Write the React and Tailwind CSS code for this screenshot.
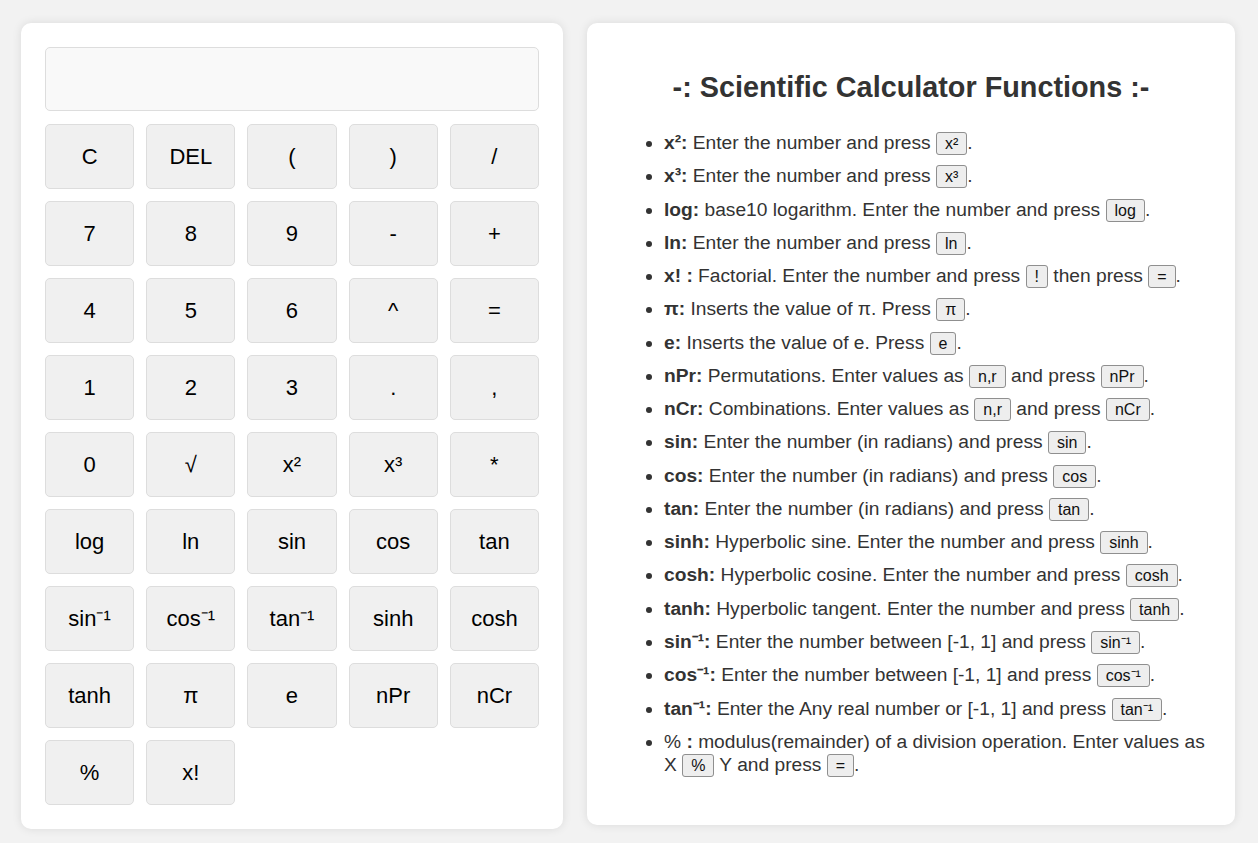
import React from "react";

const buttons = [
  "C", "DEL", "(", ")", "/",
  "7", "8", "9", "-", "+",
  "4", "5", "6", "^", "=",
  "1", "2", "3", ".", ",",
  "0", "√", "x²", "x³", "*",
  "log", "ln", "sin", "cos", "tan",
  "sin⁻¹", "cos⁻¹", "tan⁻¹", "sinh", "cosh",
  "tanh", "π", "e", "nPr", "nCr",
  "%", "x!",
];

function K({ children }) {
  return (
    <span className="bg-[#eeeeee] border border-[#8f8f8f] rounded-[3px] px-[8px] py-[2px] text-[16px] leading-[16px] text-[#111]">
      {children}
    </span>
  );
}

function Item({ children }) {
  return <li className="mb-[10.28px] leading-[23px]">{children}</li>;
}

export default function App() {
  return (
    <div
      className="min-h-[843px] bg-[#f2f2f2] flex items-start gap-6 pl-[21px] pt-[23px]"
      style={{ fontFamily: '"Liberation Sans", Arial, sans-serif' }}
    >
      <div className="w-[542px] bg-white rounded-[10px] shadow-[0_0_10px_rgba(0,0,0,0.1)] p-6 flex flex-col">
        <div className="h-[64px] bg-[#f9f9f9] border border-[#dddddd] rounded-[5px] mb-[13px]" />
        <div className="grid grid-cols-5 gap-[12px]">
          {buttons.map((b, i) => (
            <button
              key={i}
              className="h-[65px] bg-[#f0f0f0] border border-[#dddddd] rounded-[5px] text-[22px] text-black flex items-center justify-center"
            >
              {b}
            </button>
          ))}
        </div>
      </div>

      <div className="w-[648px] bg-white rounded-[10px] shadow-[0_0_10px_rgba(0,0,0,0.1)] px-6 pt-[48px] pb-[39px] text-[#333333]">
        <h2 className="text-center font-bold text-[28.8px] leading-[33px] mb-[27px]">
          -: Scientific Calculator Functions :-
        </h2>
        <ul className="list-disc pl-[53px] text-[19.2px]">
          <Item><b>x²:</b> Enter the number and press <K>x²</K>.</Item>
          <Item><b>x³:</b> Enter the number and press <K>x³</K>.</Item>
          <Item><b>log:</b> base10 logarithm. Enter the number and press <K>log</K>.</Item>
          <Item><b>ln:</b> Enter the number and press <K>ln</K>.</Item>
          <Item><b>x! :</b> Factorial. Enter the number and press <K>!</K> then press <K>=</K>.</Item>
          <Item><b>π:</b> Inserts the value of π. Press <K>π</K>.</Item>
          <Item><b>e:</b> Inserts the value of e. Press <K>e</K>.</Item>
          <Item><b>nPr:</b> Permutations. Enter values as <K>n,r</K> and press <K>nPr</K>.</Item>
          <Item><b>nCr:</b> Combinations. Enter values as <K>n,r</K> and press <K>nCr</K>.</Item>
          <Item><b>sin:</b> Enter the number (in radians) and press <K>sin</K>.</Item>
          <Item><b>cos:</b> Enter the number (in radians) and press <K>cos</K>.</Item>
          <Item><b>tan:</b> Enter the number (in radians) and press <K>tan</K>.</Item>
          <Item><b>sinh:</b> Hyperbolic sine. Enter the number and press <K>sinh</K>.</Item>
          <Item><b>cosh:</b> Hyperbolic cosine. Enter the number and press <K>cosh</K>.</Item>
          <Item><b>tanh:</b> Hyperbolic tangent. Enter the number and press <K>tanh</K>.</Item>
          <Item><b>sin⁻¹:</b> Enter the number between [-1, 1] and press <K>sin⁻¹</K>.</Item>
          <Item><b>cos⁻¹:</b> Enter the number between [-1, 1] and press <K>cos⁻¹</K>.</Item>
          <Item><b>tan⁻¹:</b> Enter the Any real number or [-1, 1] and press <K>tan⁻¹</K>.</Item>
          <Item>% <b>:</b> modulus(remainder) of a division operation. Enter values as X <K>%</K> Y and press <K>=</K>.</Item>
        </ul>
      </div>
    </div>
  );
}
